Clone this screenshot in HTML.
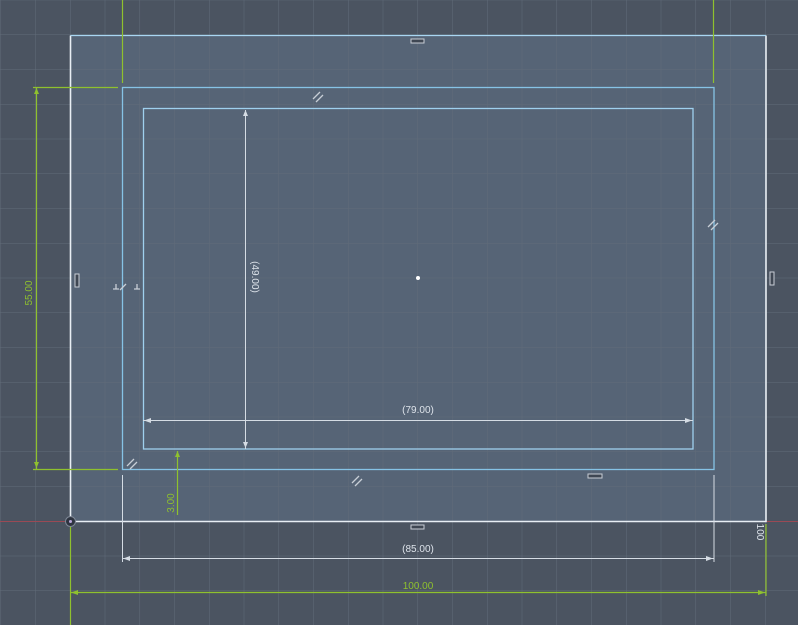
<!DOCTYPE html>
<html><head><style>
html,body{margin:0;padding:0;width:798px;height:625px;overflow:hidden;background:#4b5461}
svg{display:block}
text{font-family:"Liberation Sans",sans-serif;font-size:10px}
</style></head><body>
<svg width="798" height="625" viewBox="0 0 798 625" xmlns="http://www.w3.org/2000/svg">
<defs>
<pattern id="g" x="0.5" y="-0.25" width="34.75" height="34.75" patternUnits="userSpaceOnUse">
<path d="M0 0V34.75M0 0H34.75" stroke="#616c79" stroke-width="1" fill="none"/>
</pattern>
</defs>
<rect width="798" height="625" fill="#4b5461"/>
<rect x="70" y="35" width="696" height="486" fill="#566476"/>
<rect width="798" height="625" fill="url(#g)"/>
<line x1="0" y1="521.5" x2="70" y2="521.5" stroke="#9a4a55" stroke-width="1"/>
<line x1="766" y1="521.5" x2="798" y2="521.5" stroke="#9a4a55" stroke-width="1"/>
<path d="M70.5 35.5V521.5H766V35.5" fill="none" stroke="#e8eef4" stroke-width="1.6"/>
<line x1="70.5" y1="35.5" x2="766" y2="35.5" stroke="#a9d6f2" stroke-width="1.3"/>
<rect x="122.5" y="87.5" width="591.5" height="382" fill="none" stroke="#86c3e6" stroke-width="1.3"/>
<rect x="143.5" y="108.5" width="549.5" height="340.5" fill="none" stroke="#9fd0ee" stroke-width="1.3"/>
<g stroke="#8fc12e" stroke-width="1.2" fill="none">
<line x1="122.5" y1="0" x2="122.5" y2="83"/>
<line x1="713.5" y1="0" x2="713.5" y2="83"/>
<line x1="33" y1="87.5" x2="118" y2="87.5"/>
<line x1="33" y1="469.5" x2="118" y2="469.5"/>
<line x1="36.5" y1="87" x2="36.5" y2="469"/>
<line x1="70.5" y1="524" x2="70.5" y2="625"/>
<line x1="766" y1="524" x2="766" y2="596"/>
<line x1="70" y1="592.5" x2="766" y2="592.5"/>
<line x1="177.5" y1="451" x2="177.5" y2="515"/>
</g>
<g fill="#8fc12e">
<path d="M36.5 88l-2.5 6h5z"/><path d="M36.5 468l-2.5-6h5z"/>
<path d="M71 592.5l7-2.5v5z"/><path d="M765 592.5l-7-2.5v5z"/>
<path d="M177.5 451l-2.5 6h5z"/>
</g>
<text x="0" y="0" fill="#8fc12e" text-anchor="middle" transform="translate(32 293) rotate(-90)">55.00</text>
<text x="0" y="0" fill="#8fc12e" text-anchor="middle" transform="translate(174 503) rotate(-90)">3.00</text>
<text x="418" y="589" fill="#8fc12e" text-anchor="middle">100.00</text>
<g stroke="#d5dce4" stroke-width="1" fill="none">
<line x1="122.5" y1="475" x2="122.5" y2="562"/>
<line x1="714" y1="475" x2="714" y2="562"/>
<line x1="122" y1="558.5" x2="714" y2="558.5"/>
<line x1="143" y1="420.5" x2="693" y2="420.5"/>
<line x1="245.5" y1="110" x2="245.5" y2="449"/>
</g>
<g fill="#d5dce4">
<path d="M123 558.5l7-2.5v5z"/><path d="M713 558.5l-7-2.5v5z"/>
<path d="M144 420.5l7-2.5v5z"/><path d="M692 420.5l-7-2.5v5z"/>
<path d="M245.5 110l-2.5 6h5z"/><path d="M245.5 448l-2.5-6h5z"/>
</g>
<text x="418" y="552" fill="#dde3ea" text-anchor="middle">(85.00)</text>
<text x="418" y="413" fill="#dde3ea" text-anchor="middle">(79.00)</text>
<text x="0" y="0" fill="#dde3ea" text-anchor="middle" transform="translate(252 277) rotate(90)">(49.00)</text>
<text x="0" y="0" fill="#dde3ea" text-anchor="middle" transform="translate(757 532) rotate(90)">100</text>
<g stroke="#c8ced6" stroke-width="1" fill="#3f4753">
<rect x="411" y="39" width="13" height="4"/>
<rect x="411" y="525" width="13" height="4"/>
<rect x="588" y="474" width="14" height="4"/>
<rect x="75" y="274" width="4" height="13"/>
<rect x="770" y="272" width="4" height="13"/>
</g>
<g stroke="#c8ced6" stroke-width="1.3" fill="none">
<path d="M313 99l7-7M316 102l7-7"/>
<path d="M352 483l7-7M355 486l7-7"/>
<path d="M708 227l7-7M711 230l7-7"/>
<path d="M127 466l7-7M130 469l7-7"/>
<path d="M120 290l6-6"/>
<path d="M113 289h6M116 289v-5M134 289h6M137 289v-5"/>
</g>
<circle cx="70.5" cy="521.5" r="5" fill="#2e3440" stroke="#7f8896"/>
<circle cx="70.5" cy="521.5" r="1.5" fill="#b7a6d8"/>
<circle cx="418" cy="278" r="2" fill="#ffffff"/>
</svg>
</body></html>
